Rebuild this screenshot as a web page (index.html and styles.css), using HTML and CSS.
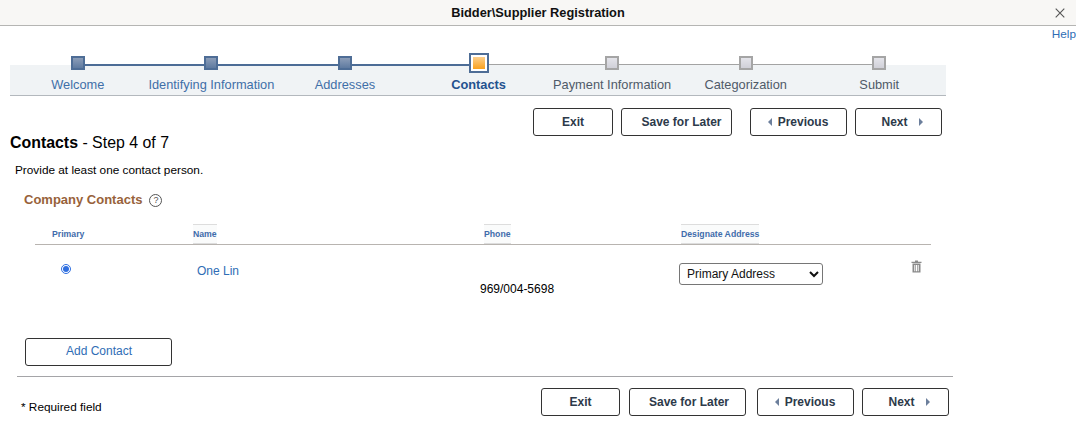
FILE: index.html
```html
<!DOCTYPE html>
<html lang="en">
<head>
    <meta charset="UTF-8">
    <title>Bidder\Supplier Registration</title>
    <link rel="stylesheet" href="styles.css">
</head>
<body>
    <header class="title-bar">
        <h1>Bidder\Supplier Registration</h1>
        <button class="close-btn" type="button" aria-label="Close">
            <svg width="10" height="10" viewBox="0 0 10 10"><path d="M.7.7l8.6 8.6M9.3.7L.7 9.3" stroke="#555" stroke-width="1.1" fill="none"/></svg>
        </button>
    </header>
    <div class="help-row"><a href="#">Help</a></div>

    <ol class="train">
        <li class="step done"><span class="node"><i></i></span><a href="#">Welcome</a></li>
        <li class="step done"><span class="node"><i></i></span><a href="#">Identifying Information</a></li>
        <li class="step done"><span class="node"><i></i></span><a href="#">Addresses</a></li>
        <li class="step current"><span class="node"><i></i></span><a href="#">Contacts</a></li>
        <li class="step todo"><span class="node"><i></i></span><a href="#">Payment Information</a></li>
        <li class="step todo"><span class="node"><i></i></span><a href="#">Categorization</a></li>
        <li class="step todo"><span class="node"><i></i></span><a href="#">Submit</a></li>
    </ol>

    <div class="actions actions-top">
        <button class="btn btn-exit" type="button">Exit</button>
        <button class="btn btn-save" type="button">Save for Later</button>
        <button class="btn btn-prev" type="button"><span class="arrow-left"></span>Previous</button>
        <button class="btn btn-next" type="button">Next<span class="arrow-right"></span></button>
    </div>

    <h2 class="page-title"><b>Contacts</b> - Step 4 of 7</h2>
    <p class="intro">Provide at least one contact person.</p>

    <h3 class="group-title">Company Contacts <span class="hint">?</span></h3>

    <div class="contacts">
        <div class="head primary-col"><span>Primary</span></div>
        <div class="head"><span>Name</span></div>
        <div class="head phone-head"><span>Phone</span></div>
        <div class="head address-head"><span>Designate Address</span></div>

        <div class="cell radio-cell"><input type="radio" name="primary" checked></div>
        <div class="cell name-cell"><a href="#">One Lin</a></div>
        <div class="cell phone-cell">969/004-5698</div>
        <div class="cell select-cell">
            <select><option>Primary Address</option></select>
            <svg class="trash" width="11" height="13" viewBox="0 0 11 13"><path d="M4 .5h3v1.2h3.5v1.2H.5V1.7H4zM1.5 3.6h8V12.5h-8zM3.3 5v6.2h1V5zM5 5v6.2h1V5zM6.7 5v6.2h1V5z" fill="#8a8a8a" fill-rule="evenodd"/></svg>
        </div>
    </div>

    <button class="add-btn" type="button">Add Contact</button>

    <hr class="rule">

    <div class="footer">
        <span class="required">* Required field</span>
        <div class="actions">
            <button class="btn btn-exit" type="button">Exit</button>
            <button class="btn btn-save-low" type="button">Save for Later</button>
            <button class="btn btn-prev" type="button"><span class="arrow-left"></span>Previous</button>
            <button class="btn btn-next" type="button">Next<span class="arrow-right"></span></button>
        </div>
    </div>
</body>
</html>
```

FILE: styles.css
```css
* {
    box-sizing: border-box;
}
body {
    margin: 0;
    font-family: "Liberation Sans", Arial, sans-serif;
    font-size: 12px;
    color: #000;
    background: #fff;
    overflow: hidden;
}
a {
    text-decoration: none;
    color: #2f6db5;
}

/* title bar */
.title-bar {
    height: 26px;
    background: #f8f7f5;
    border-bottom: 1px solid #b5b5b3;
    display: flex;
    align-items: center;
    justify-content: center;
    position: relative;
}
.title-bar h1 {
    margin: 0;
    font-size: 12.8px;
    font-weight: bold;
    color: #111;
}
.close-btn {
    position: absolute;
    right: 11px;
    top: 8px;
    padding: 0;
    border: none;
    background: none;
    line-height: 0;
}
.help-row {
    height: 27px;
    text-align: right;
    font-size: 11.8px;
    padding-top: 1px;
}

/* step train */
.train {
    list-style: none;
    margin: 0 0 0 10px;
    padding: 0 0 0 1px;
    width: 936px;
    height: 43px;
    display: flex;
    background: linear-gradient(transparent 12px, #f0f3f5 12px);
    border-bottom: 1px solid #b3b8bd;
}
.step {
    flex: 1;
    position: relative;
    display: flex;
    flex-direction: column;
    align-items: center;
    font-size: 12.8px;
    white-space: nowrap;
}
.step::after {
    content: "";
    position: absolute;
    left: 50%;
    width: 100%;
    top: 11px;
    height: 2px;
    background: #4c6c96;
}
.step.current::after, .step.todo::after {
    height: 1px;
    background: #a3a3a3;
}
.step:last-child::after {
    display: none;
}
.node {
    position: relative;
    z-index: 1;
    width: 20px;
    height: 20px;
    margin-bottom: 4px;
    display: flex;
    align-items: center;
    justify-content: center;
}
.node i {
    display: block;
    width: 14px;
    height: 14px;
    border: 2px solid #4e6d96;
    background: linear-gradient(#8c9db8, #5f7aa0);
}
.todo .node i {
    border-color: #a5a5a5;
    background: linear-gradient(#e4e4ea, #d0d0d8);
}
.current .node {
    border: 2px solid #4e6d96;
    background: #fff;
}
.current .node i {
    width: 12px;
    height: 12px;
    border: none;
    background: linear-gradient(#fdcf8c, #f9a11f);
}
.step a {
    color: #3f6fa8;
    line-height: 16px;
}
.step.current a {
    color: #24528f;
    font-weight: bold;
}
.step.todo a {
    color: #4f5a68;
}

/* buttons */
.actions {
    display: flex;
}
.actions-top {
    justify-content: flex-end;
    width: 942px;
    margin-top: 12px;
}
.btn {
    height: 28px;
    padding: 0;
    background: #fff;
    border: 1px solid #333;
    border-radius: 3px;
    font: bold 12px "Liberation Sans", Arial, sans-serif;
    color: #2d3a4a;
    display: flex;
    align-items: center;
    justify-content: center;
}
.btn-exit {
    width: 80px;
    margin-right: 8px;
}
.footer .btn-exit {
    width: 79px;
    margin-right: 9px;
}
.btn-save {
    width: 111px;
    margin-right: 18px;
    padding-left: 10px;
}
.btn-save-low {
    width: 117px;
    margin-right: 11px;
    padding-left: 3px;
}
.btn-prev {
    width: 97px;
    margin-right: 8px;
    padding-right: 1px;
}
.btn-next {
    width: 87px;
    padding-left: 7px;
}
.arrow-left, .arrow-right {
    width: 0;
    height: 0;
    border-top: 4px solid transparent;
    border-bottom: 4px solid transparent;
}
.arrow-left {
    border-right: 4px solid #6c7f9c;
    margin-right: 6px;
}
.arrow-right {
    border-left: 4px solid #6c7f9c;
    margin-left: 11px;
}

/* headings */
.page-title {
    margin: -2px 0 0 10px;
    font-size: 15.9px;
    font-weight: normal;
    line-height: 18px;
}
.intro {
    margin: 11px 0 0 15px;
    font-size: 11.8px;
    line-height: 14px;
}
.group-title {
    margin: 15px 0 0 24px;
    font-size: 13px;
    font-weight: bold;
    color: #98623a;
    line-height: 16px;
    display: flex;
    align-items: center;
}
.hint {
    width: 13px;
    height: 13px;
    margin-left: 7px;
    border: 1px solid #555;
    border-radius: 50%;
    font-size: 9px;
    font-weight: normal;
    color: #555;
    display: flex;
    align-items: center;
    justify-content: center;
}

/* contacts grid */
.contacts {
    margin: 16px 0 0 35px;
    width: 896px;
    display: grid;
    grid-template-columns: 158px 287px 199px 1fr;
    grid-template-rows: 21px 78px;
    background: linear-gradient(transparent 20px, #b8b4b0 20px, #b8b4b0 21px, transparent 21px);
}
.head {
    display: flex;
}
.head span {
    height: 20px;
    border-top: 1px solid #ddd;
    border-bottom: 1px solid #ddd;
    background: #fafbfb;
    font-size: 8.7px;
    font-weight: bold;
    line-height: 18px;
    color: #3f6cab;
}
.primary-col span {
    margin-left: 17px;
    background: none;
    border-color: transparent;
}
.phone-head span {
    margin-left: 4px;
}
.address-head span {
    margin-left: 2px;
}
.radio-cell {
    padding: 19px 0 0 26px;
}
.radio-cell input {
    width: 10px;
    height: 10px;
    margin: 0;
    display: block;
    accent-color: #2f6fe0;
}
.name-cell {
    padding: 19px 0 0 4px;
    line-height: 14px;
}
.phone-cell {
    padding-top: 37px;
    line-height: 14px;
}
.select-cell {
    padding-top: 18px;
    display: flex;
    align-items: flex-start;
}
.select-cell select {
    width: 144px;
    height: 22px;
    font: 12px "Liberation Sans", Arial, sans-serif;
    color: #111;
    background: #fff;
    border: 1px solid #767676;
    border-radius: 3px;
    padding-left: 3px;
}
.trash {
    margin: -3px 0 0 88px;
}
.add-btn {
    display: block;
    margin: 15px 0 0 25px;
    width: 147px;
    height: 28px;
    padding: 0 0 2px 1px;
    background: #fff;
    border: 1px solid #333;
    border-radius: 3px;
    font: 12px "Liberation Sans", Arial, sans-serif;
    color: #2f6db5;
}
.rule {
    margin: 10px 0 0 17px;
    width: 936px;
    height: 1px;
    border: none;
    background: #a5a5a8;
}
.footer {
    margin: 11px 0 0 21px;
    width: 928px;
    display: flex;
    justify-content: space-between;
}
.required {
    margin-top: 12px;
    font-size: 11.8px;
    line-height: 14px;
}
```
